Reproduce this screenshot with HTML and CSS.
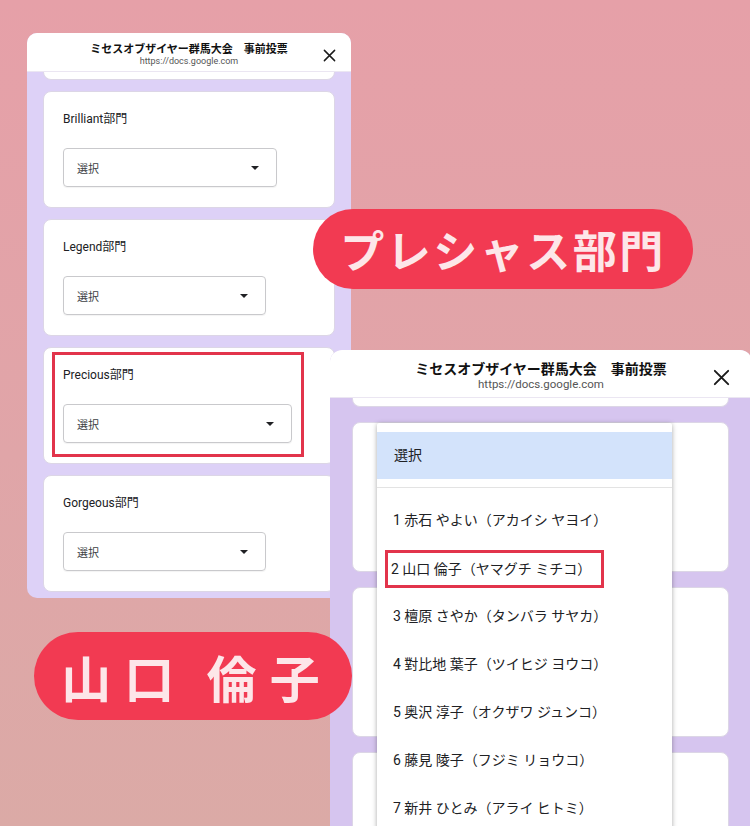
FILE: index.html
```html
<!DOCTYPE html>
<html lang="ja">
<head>
    <meta charset="UTF-8">
    <meta name="viewport" content="width=device-width, initial-scale=1.0">
    <title>ミセスオブザイヤー群馬大会 事前投票</title>
    <link rel="stylesheet" href="styles.css">
</head>
<body>
    <div class="stage">

        <!-- 左のスクリーンショット -->
        <section class="window window-left">
            <header class="win-head">
                <div class="win-title">ミセスオブザイヤー群馬大会　事前投票</div>
                <div class="win-url">https://docs.google.com</div>
                <svg class="win-close" viewBox="0 0 14 14"><path d="M1.5 1.5 L12.5 12.5 M12.5 1.5 L1.5 12.5"/></svg>
            </header>
            <div class="win-body">
                <div class="card card-stub"></div>
                <div class="card">
                    <div class="q-label">Brilliant部門</div>
                    <div class="select select-a"><span>選択</span><i class="caret"></i></div>
                </div>
                <div class="card">
                    <div class="q-label">Legend部門</div>
                    <div class="select select-b"><span>選択</span><i class="caret"></i></div>
                </div>
                <div class="card card-marked">
                    <div class="q-label">Precious部門</div>
                    <div class="select select-c"><span>選択</span><i class="caret"></i></div>
                    <div class="mark-box"></div>
                </div>
                <div class="card">
                    <div class="q-label">Gorgeous部門</div>
                    <div class="select select-b"><span>選択</span><i class="caret"></i></div>
                </div>
            </div>
        </section>

        <!-- 右のスクリーンショット -->
        <section class="window window-right">
            <header class="win-head">
                <div class="win-title">ミセスオブザイヤー群馬大会　事前投票</div>
                <div class="win-url">https://docs.google.com</div>
                <svg class="win-close" viewBox="0 0 14 14"><path d="M1.5 1.5 L12.5 12.5 M12.5 1.5 L1.5 12.5"/></svg>
            </header>
            <div class="win-body">
                <div class="card card-stub"></div>
                <div class="card"></div>
                <div class="card"></div>
                <div class="card"></div>
            </div>
            <div class="dropdown">
                <div class="dd-current">選択</div>
                <ul class="dd-list">
                    <li>1 赤石 やよい（アカイシ ヤヨイ）</li>
                    <li><span class="dd-mark">2 山口 倫子（ヤマグチ ミチコ）</span></li>
                    <li>3 檀原 さやか（タンバラ サヤカ）</li>
                    <li>4 對比地 葉子（ツイヒジ ヨウコ）</li>
                    <li>5 奥沢 淳子（オクザワ ジュンコ）</li>
                    <li>6 藤見 陵子（フジミ リョウコ）</li>
                    <li>7 新井 ひとみ（アライ ヒトミ）</li>
                </ul>
            </div>
        </section>

        <div class="pill pill-category">プレシャス部門</div>
        <div class="pill pill-name">山口 倫子</div>
    </div>
</body>
</html>
```

FILE: styles.css
```css
body {
    margin: 0;
    padding: 0;
    font-family: Roboto, "Noto Sans CJK JP", sans-serif;
    color: #202124;
}
.stage {
    position: relative;
    width: 750px;
    height: 826px;
    overflow: hidden;
    background: linear-gradient(180deg, #e6a0a8 0%, #e0a5a8 55%, #dbaaa6 100%);
}

/* windows */
.window {
    position: absolute;
    overflow: hidden;
    display: flex;
    flex-direction: column;
}
.window-left {
    left: 27px;
    top: 33px;
    width: 324px;
    height: 565px;
    border-radius: 10px;
    background-color: #ddd1f7;
}
.window-right {
    left: 330px;
    top: 350px;
    width: 422px;
    height: 480px;
    border-radius: 12px 12px 0 0;
    background-color: #d6c5ef;
}
.win-head {
    position: relative;
    flex: none;
    background-color: #fff;
    text-align: center;
    border-bottom: 1px solid #ebe6f2;
    box-sizing: border-box;
}
.win-title {
    font-family: "Noto Sans CJK JP", sans-serif;
    font-weight: 700;
    color: #111;
}
.win-url {
    font-family: Roboto, sans-serif;
    color: #555;
}
.win-close {
    position: absolute;
    fill: none;
    stroke: #1b1b1b;
    stroke-width: 1.6;
    stroke-linecap: round;
}
.window-left .win-head {
    height: 39px;
    padding-top: 8px;
}
.window-left .win-title {
    font-size: 11px;
    line-height: 14px;
}
.window-left .win-url {
    font-size: 9px;
    line-height: 12px;
}
.window-left .win-close {
    right: 15px;
    top: 16px;
    width: 13px;
    height: 13px;
}
.window-right .win-head {
    height: 48px;
    padding-top: 9px;
}
.window-right .win-title {
    font-size: 14px;
    line-height: 18px;
}
.window-right .win-url {
    font-size: 11.5px;
    line-height: 14px;
}
.window-right .win-close {
    right: 22px;
    top: 19px;
    width: 17px;
    height: 17px;
}

/* form cards */
.win-body {
    display: flex;
    flex-direction: column;
}
.window-left .win-body {
    padding: 0 16px;
    gap: 11px;
}
.window-right .win-body {
    padding: 0 23px 0 22px;
    gap: 15px;
}
.card {
    position: relative;
    flex: none;
    background-color: #fff;
    border: 1px solid #dcd6e6;
    border-radius: 8px;
    box-sizing: border-box;
}
.card-stub {
    border-top: none;
    border-radius: 0 0 8px 8px;
}
.window-left .card {
    padding: 19px 19px 21px;
    height: 117px;
}
.window-left .card-stub {
    height: 8px;
    padding: 0;
}
.window-right .card {
    height: 150px;
}
.window-right .card-stub {
    height: 9px;
}
.q-label {
    font-size: 12px;
    line-height: 16px;
    color: #202124;
}
.select {
    display: flex;
    align-items: center;
    justify-content: space-between;
    height: 39px;
    margin-top: 21px;
    padding: 0 17px 0 13px;
    border: 1px solid #c9c9cc;
    border-radius: 4px;
    box-sizing: border-box;
    font-size: 11px;
    color: #3c4043;
    box-shadow: 0 1px 1px rgba(0, 0, 0, 0.05);
}
.select-a { width: 214px; }
.select-b { width: 203px; }
.select-c { width: 229px; }
.caret {
    width: 0;
    height: 0;
    border-left: 4px solid transparent;
    border-right: 4px solid transparent;
    border-top: 4px solid #202124;
}
.mark-box {
    position: absolute;
    left: 8px;
    top: 4px;
    width: 252px;
    height: 105px;
    border: 3px solid #e2344b;
    box-sizing: border-box;
}

/* open dropdown */
.dropdown {
    position: absolute;
    left: 47px;
    top: 73px;
    width: 295px;
    height: 420px;
    padding-top: 9px;
    background-color: #fff;
    box-sizing: border-box;
    box-shadow: 0 1px 5px rgba(0, 0, 0, 0.35);
    border-radius: 2px;
    font-family: Roboto, "Noto Sans CJK JP", sans-serif;
}
.dd-current {
    height: 47px;
    line-height: 47px;
    padding-left: 17px;
    background-color: #d3e3fb;
    font-size: 14px;
    color: #202124;
}
.dd-list {
    list-style: none;
    margin: 8px 0 0;
    padding: 8px 0 0;
    border-top: 1px solid #e3e3e3;
}
.dd-list li {
    height: 48px;
    line-height: 48px;
    padding-left: 16px;
    font-size: 14px;
    color: #202124;
    white-space: nowrap;
}
.dd-mark {
    display: inline-block;
    line-height: 32px;
    margin-left: -8px;
    padding: 0 10px 0 3px;
    border: 3px solid #e2344b;
    vertical-align: middle;
}

/* captions */
.pill {
    position: absolute;
    display: flex;
    align-items: center;
    justify-content: center;
    background-color: #f23a52;
    color: #fde6e9;
    font-family: "Noto Sans CJK JP", sans-serif;
    font-weight: 700;
    white-space: nowrap;
}
.pill-category {
    left: 313px;
    top: 209px;
    width: 380px;
    height: 80px;
    border-radius: 40px;
    font-size: 44px;
    letter-spacing: 2.5px;
}
.pill-name {
    left: 34px;
    top: 632px;
    width: 318px;
    height: 88px;
    border-radius: 44px;
    font-size: 50px;
    letter-spacing: 13px;
    word-spacing: -5px;
    padding-left: 8px;
    box-sizing: border-box;
}
```
